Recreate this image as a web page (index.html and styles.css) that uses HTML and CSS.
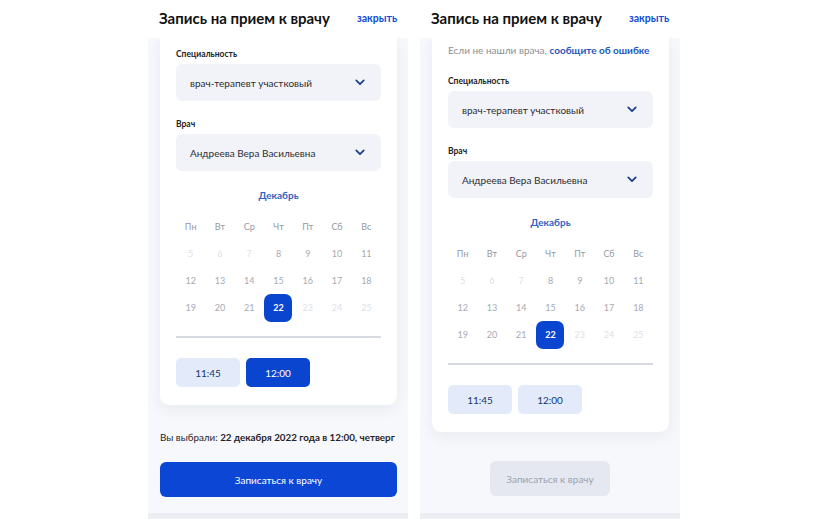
FILE: index.html
```html
<!DOCTYPE html>
<html lang="ru">
<head>
    <meta charset="UTF-8">
    <meta name="viewport" content="width=device-width, initial-scale=1.0">
    <title>Запись на прием к врачу</title>
    <link rel="stylesheet" href="styles.css">
</head>
<body>
    <main class="screens">
        <!-- Шаг с выбранным временем -->
        <section class="screen">
            <header class="screen-header">
                <h1>Запись на прием к врачу</h1>
                <a href="#" class="close-link">закрыть</a>
            </header>
            <div class="screen-body">
                <div class="card card-scrolled">
                    <p class="field-label">Специальность</p>
                    <div class="select">
                        <span>врач-терапевт участковый</span>
                        <svg class="chevron" viewBox="0 0 12 8"><path d="M1.5 1.5 6 6l4.5-4.5"/></svg>
                    </div>
                    <p class="field-label">Врач</p>
                    <div class="select">
                        <span>Андреева Вера Васильевна</span>
                        <svg class="chevron" viewBox="0 0 12 8"><path d="M1.5 1.5 6 6l4.5-4.5"/></svg>
                    </div>
                    <p class="month">Декабрь</p>
                    <div class="calendar">
                        <span class="weekday">Пн</span><span class="weekday">Вт</span><span class="weekday">Ср</span><span class="weekday">Чт</span><span class="weekday">Пт</span><span class="weekday">Сб</span><span class="weekday">Вс</span>
                        <span class="day past">5</span><span class="day past">6</span><span class="day past">7</span><span class="day">8</span><span class="day">9</span><span class="day">10</span><span class="day">11</span>
                        <span class="day">12</span><span class="day">13</span><span class="day">14</span><span class="day">15</span><span class="day">16</span><span class="day">17</span><span class="day">18</span>
                        <span class="day">19</span><span class="day">20</span><span class="day">21</span><span class="day selected"><b>22</b></span><span class="day past">23</span><span class="day past">24</span><span class="day past">25</span>
                    </div>
                    <div class="times">
                        <button class="time">11:45</button>
                        <button class="time active">12:00</button>
                    </div>
                </div>
                <p class="summary">Вы выбрали: <b>22 декабря 2022 года в 12:00, четверг</b></p>
                <button class="submit">Записаться к врачу</button>
            </div>
            <div class="screen-footer"></div>
        </section>

        <!-- Шаг без выбранного времени -->
        <section class="screen">
            <header class="screen-header">
                <h1>Запись на прием к врачу</h1>
                <a href="#" class="close-link">закрыть</a>
            </header>
            <div class="screen-body">
                <div class="card">
                    <p class="hint">Если не нашли врача, <a href="#">сообщите об ошибке</a></p>
                    <p class="field-label">Специальность</p>
                    <div class="select">
                        <span>врач-терапевт участковый</span>
                        <svg class="chevron" viewBox="0 0 12 8"><path d="M1.5 1.5 6 6l4.5-4.5"/></svg>
                    </div>
                    <p class="field-label">Врач</p>
                    <div class="select">
                        <span>Андреева Вера Васильевна</span>
                        <svg class="chevron" viewBox="0 0 12 8"><path d="M1.5 1.5 6 6l4.5-4.5"/></svg>
                    </div>
                    <p class="month">Декабрь</p>
                    <div class="calendar">
                        <span class="weekday">Пн</span><span class="weekday">Вт</span><span class="weekday">Ср</span><span class="weekday">Чт</span><span class="weekday">Пт</span><span class="weekday">Сб</span><span class="weekday">Вс</span>
                        <span class="day past">5</span><span class="day past">6</span><span class="day past">7</span><span class="day">8</span><span class="day">9</span><span class="day">10</span><span class="day">11</span>
                        <span class="day">12</span><span class="day">13</span><span class="day">14</span><span class="day">15</span><span class="day">16</span><span class="day">17</span><span class="day">18</span>
                        <span class="day">19</span><span class="day">20</span><span class="day">21</span><span class="day selected"><b>22</b></span><span class="day past">23</span><span class="day past">24</span><span class="day past">25</span>
                    </div>
                    <div class="times">
                        <button class="time">11:45</button>
                        <button class="time">12:00</button>
                    </div>
                </div>
                <button class="submit" disabled>Записаться к врачу</button>
            </div>
            <div class="screen-footer"></div>
        </section>
    </main>
</body>
</html>
```

FILE: styles.css
```css
body {
    margin: 0;
    padding: 0;
    background: #fff;
    font-family: Lato, "Noto Sans", sans-serif;
    color: #1f2329;
}
p {
    margin: 0;
}
.screens {
    display: flex;
    gap: 12px;
    padding-left: 148px;
    height: 519px;
    overflow: hidden;
}
.screen {
    width: 260px;
    display: flex;
    flex-direction: column;
    background: #f7f8fb;
}
.screen-header {
    height: 38px;
    display: flex;
    align-items: center;
    justify-content: space-between;
    padding: 0 11px 2px 11px;
    box-sizing: border-box;
    background: #fff;
    position: relative;
    z-index: 1;
}
.screen-header h1 {
    margin: 0;
    font-size: 15px;
    font-weight: 700;
    color: #111;
}
.close-link {
    font-size: 10.5px;
    font-weight: 700;
    color: #0d4cd3;
    text-decoration: none;
}
.screen-body {
    flex: 1;
    display: flex;
    flex-direction: column;
}
.card {
    margin: 0 11px 0 12px;
    padding: 6px 16px 18px 16px;
    background: #fff;
    border-radius: 0 0 9px 9px;
    box-shadow: 0 4px 14px rgba(40, 60, 110, 0.08);
}
.card-scrolled {
    padding-top: 10px;
}
.hint {
    font-size: 10px;
    line-height: 12px;
    color: #8a9099;
    margin-bottom: 19px;
}
.hint a {
    color: #1d56b8;
    font-weight: 700;
    text-decoration: none;
}
.field-label {
    font-size: 8.5px;
    line-height: 12px;
    font-weight: 700;
    color: #222;
    margin-bottom: 4px;
}
.select {
    height: 37px;
    display: flex;
    align-items: center;
    justify-content: space-between;
    padding: 0 16px 0 14px;
    margin-bottom: 17px;
    background: #f1f3f8;
    border-radius: 6px;
    font-size: 10px;
    color: #2b2f36;
}
.chevron {
    width: 10px;
    height: 7px;
    fill: none;
    stroke: #163a86;
    stroke-width: 2;
    stroke-linecap: round;
    stroke-linejoin: round;
}
.month {
    text-align: center;
    font-size: 10px;
    line-height: 14px;
    font-weight: 700;
    color: #2d63c4;
    margin-top: 1px;
    margin-bottom: 11px;
}
.calendar {
    display: grid;
    grid-template-columns: repeat(7, 1fr);
    grid-auto-rows: 27px;
    padding-bottom: 15px;
    border-bottom: 2px solid #d7dae1;
    font-size: 9px;
}
.weekday,
.day {
    display: flex;
    align-items: center;
    justify-content: center;
}
.weekday {
    color: #949aa3;
}
.day {
    color: #a5aab3;
}
.day.past {
    color: #dcdfe5;
}
.day.selected b {
    width: 28px;
    height: 28px;
    display: flex;
    align-items: center;
    justify-content: center;
    border-radius: 7px;
    background: #0a45cf;
    color: #fff;
    font-weight: 700;
}
.times {
    display: flex;
    gap: 6px;
    margin-top: 20px;
}
.time {
    width: 64px;
    height: 29px;
    border: none;
    border-radius: 5px;
    background: #e3ebfa;
    color: #17356f;
    font-family: inherit;
    font-size: 10px;
    padding: 0;
}
.time.active {
    background: #0a45cf;
    color: #fff;
}
.summary {
    margin: 25px 0 0 12px;
    font-size: 9.8px;
    line-height: 14px;
    white-space: nowrap;
    color: #1f2329;
}
.summary b {
    font-weight: 700;
}
.submit {
    margin: 18px 11px 0 12px;
    height: 35px;
    border: none;
    border-radius: 6px;
    background: #0b47d4;
    color: #fff;
    font-family: inherit;
    font-size: 10px;
}
.submit:disabled {
    width: 120px;
    align-self: center;
    margin: 29px 0 0 0;
    background: #e5e8f0;
    color: #9ba2ae;
}
.screen-footer {
    height: 6px;
    background: #eceef3;
}
```
